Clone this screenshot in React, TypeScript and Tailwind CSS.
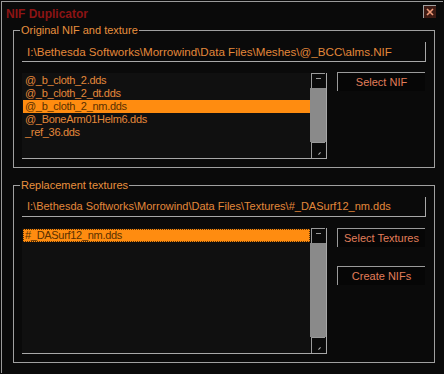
import React from 'react';

const font = { fontFamily: '"Liberation Sans", Arial, sans-serif' };

function ScrollBar() {
  return (
    <div className="w-[16px] flex flex-col bg-[#0c0c0c]">
      <div className="h-[15px] mx-[1px] border-t border-l border-[#9a9a9a] bg-[#0a0a0a] flex items-start justify-center">
        <div className="mt-[4px] w-[5px] h-px bg-[#9a9a9a]" />
      </div>
      <div className="flex-1 bg-[#8a8a8a]" />
      <div className="h-[16px] mx-[1px] border-t border-l border-[#9a9a9a] bg-[#0a0a0a] relative">
        <div className="absolute right-[4px] bottom-[4px] w-[3px] h-px bg-[#b0b0b0] -rotate-45" />
      </div>
    </div>
  );
}

function ListBox({
  items,
  selected,
  focus,
  height,
}: {
  items: string[];
  selected: number;
  focus?: boolean;
  height: string;
}) {
  return (
    <div className={`w-[305px] ${height} flex border-r border-b border-[#a8a8a8] bg-[#101010]`}>
      <div className="flex-1 pt-[1px] pl-[1px] overflow-hidden">
        {items.map((it, i) => (
          <div
            key={it}
            className={
              'h-[13px] leading-[13px] pl-[2px] text-[11px] tracking-[-0.3px] whitespace-nowrap ' +
              (i === selected
                ? 'bg-[#ff8c10] text-[#5a3000]' + (focus ? ' outline-1 outline-dotted outline-[#5a3000] -outline-offset-1' : '')
                : 'text-[#e3883a]')
            }
          >
            {it}
          </div>
        ))}
      </div>
      <ScrollBar />
    </div>
  );
}

function Btn({ label }: { label: string }) {
  return (
    <div className="w-[88px] h-[19px] border-t border-l border-[#9a9a9a] bg-[#060606] flex items-center justify-center text-[11px] text-[#e27e5a]">
      {label}
    </div>
  );
}

function Group({ title, children }: { title: string; children: React.ReactNode }) {
  return (
    <div className="relative border border-[#a0a0a0] pt-[11px] pb-[8px] pl-[8px] pr-[8px]">
      <span className="absolute left-[6px] -top-[8px] px-[1px] bg-[#0a0a0a] text-[11px] leading-[14px] text-[#e8903e]">
        {title}
      </span>
      {children}
    </div>
  );
}

function PathBox({ text, size }: { text: string; size: string }) {
  return (
    <div className={`h-[20px] border-r border-b border-[#a8a8a8] bg-[#0a0a0a] flex items-center pl-[5px] ${size} text-[#e3883a] whitespace-nowrap overflow-hidden`}>
      {text}
    </div>
  );
}

export default function App() {
  return (
    <div className="w-[444px] h-[374px] bg-[#0a0a0a] p-px" style={font}>
      <div className="h-full border-l border-t border-[#9a9a9a]">
        <div className="h-[28px] flex items-start justify-between pl-[4px] pr-[7px]">
          <div className="mt-[3px] text-[12px] font-bold text-[#8c1414]">NIF Duplicator</div>
          <div className="mt-[3px] w-[13px] h-[13px] border-t border-l border-[#a0a0a0] bg-[#3e1b14] flex items-center justify-center">
            <svg width="8" height="8" viewBox="0 0 8 8">
              <path d="M1 1 L7 7 M7 1 L1 7" stroke="#f09a78" strokeWidth="1.6" />
            </svg>
          </div>
        </div>
        <div className="pl-[11px] pr-[8px] flex flex-col gap-[17px]">
          <Group title="Original NIF and texture">
            <PathBox size="text-[11.6px]" text="I:\Bethesda Softworks\Morrowind\Data Files\Meshes\@_BCC\alms.NIF" />
            <div className="mt-[11px] flex">
              <ListBox
                height="h-[86px]"
                selected={2}
                items={[
                  '@_b_cloth_2.dds',
                  '@_b_cloth_2_dt.dds',
                  '@_b_cloth_2_nm.dds',
                  '@_BoneArm01Helm6.dds',
                  '_ref_36.dds',
                ]}
              />
              <div className="ml-[10px] -mt-[1px]">
                <Btn label="Select NIF" />
              </div>
            </div>
          </Group>
          <Group title="Replacement textures">
            <PathBox size="text-[11px]" text="I:\Bethesda Softworks\Morrowind\Data Files\Textures\#_DASurf12_nm.dds" />
            <div className="mt-[11px] flex">
              <ListBox height="h-[126px]" selected={0} focus items={['#_DASurf12_nm.dds']} />
              <div className="ml-[10px] flex flex-col gap-[19px]">
                <Btn label="Select Textures" />
                <Btn label="Create NIFs" />
              </div>
            </div>
          </Group>
        </div>
      </div>
    </div>
  );
}
